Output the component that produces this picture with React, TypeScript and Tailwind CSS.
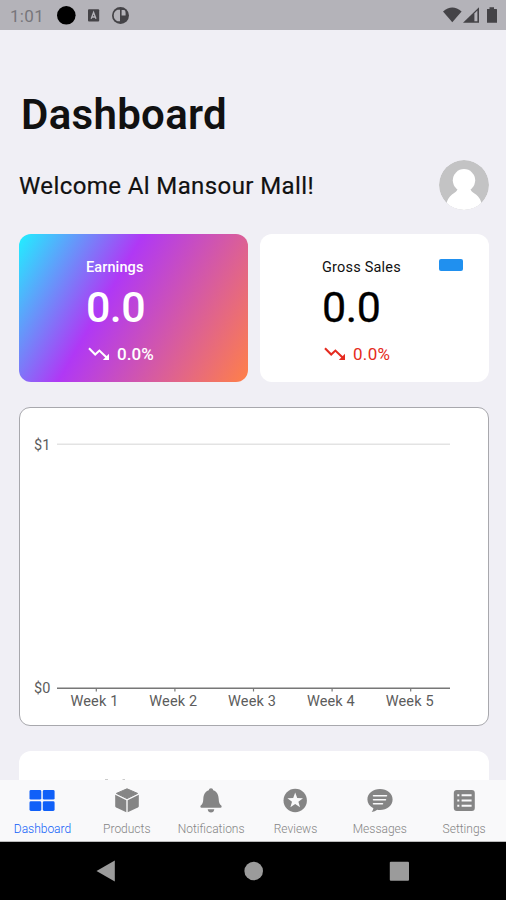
import React from "react";

function TrendDown() {
  return (
    <svg width="22" height="14" viewBox="0 0 22 14" fill="none" stroke="currentColor" strokeWidth="2.1">
      <path d="M1 1.2 L7.2 7.6 L11.4 3.6 L18.6 10.6" />
      <path d="M21 6.8 V13 H14.8 Z" fill="currentColor" stroke="none" />
    </svg>
  );
}

function StatusBar() {
  return (
    <header className="flex h-[30px] shrink-0 items-center justify-between bg-[#b4b3b9] pl-[10px] pr-[8px] text-[#77767b]">
      <div className="flex items-center">
        <span className="w-[46px] text-[17px] leading-[30px] tracking-[0.3px] pt-[1px]">1:01</span>
        <svg width="75" height="22" viewBox="56 4 75 22">
          <circle cx="66.3" cy="15.3" r="9.3" fill="#000" />
          <rect x="88" y="9.3" width="11.2" height="12.2" rx="1" fill="#444347" />
          <path d="M91.2 18.8 L93.6 12.4 L96 18.8 M92 17 H95" fill="none" stroke="#b4b3b9" strokeWidth="1.3" />
          <circle cx="120.5" cy="15.5" r="8.5" fill="#444347" />
          <path d="M120 9.8 H117.5 A6.2 6.2 0 0 0 117.5 21.2 H120 Z" fill="#b4b3b9" />
          <path d="M121.6 10 H124.4 Q125.6 10.6 125.6 13 V15.6 H121.6 Z" fill="#b4b3b9" />
        </svg>
      </div>
      <svg width="56" height="20" viewBox="442 5 56 20" fill="#444347">
        <path d="M443 11.5 Q452.3 3.5 461.6 11.5 L452.3 22.3 Z" />
        <path d="M463 22.7 L479 7.2 V22.7 Z" />
        <path d="M474.4 13.5 L477.4 10.6 V21.2 H474.4 Z" fill="#b4b3b9" />
        <path d="M487 9 H489.5 V7.3 H494 V9 H496.5 Q497 9 497 10 V22.7 H487 Z" />
      </svg>
    </header>
  );
}

function Avatar() {
  return (
    <svg width="50" height="50" viewBox="0 0 50 50">
      <defs>
        <clipPath id="avatar">
          <circle cx="25" cy="25" r="25" />
        </clipPath>
      </defs>
      <g clipPath="url(#avatar)">
        <circle cx="25" cy="25" r="25" fill="#c3c3c4" />
        <circle cx="25" cy="20.3" r="11.2" fill="#fff" />
        <path d="M19 27 H31 C31 31 34 32.5 37 34.5 Q41 37.5 42.5 43 Q35 50 25 50 Q15 50 7.5 43 Q9 37.5 13 34.5 C16 32.5 19 31 19 27 Z" fill="#fff" />
      </g>
    </svg>
  );
}

const weeks = ["Week 1", "Week 2", "Week 3", "Week 4", "Week 5"];

function Chart() {
  return (
    <section className="mt-[25px] h-[319px] shrink-0 rounded-[11px] border border-[#a8a8ad] bg-white">
      <svg width="467" height="317" viewBox="20 408 467 317" fontSize="14.5" fill="#5c5c5c" letterSpacing="0.15">
        <text x="34" y="449.5">$1</text>
        <text x="34" y="693">$0</text>
        <path d="M57 444.3 H450" stroke="#e3e3e3" strokeWidth="1.4" />
        <path d="M57 688.3 H450" stroke="#777" strokeWidth="1.5" />
        {weeks.map((week, i) => (
          <g key={week}>
            <path d={`M${96.3 + i * 78.6} 688 v3.5`} stroke="#777" strokeWidth="1.2" />
            <text x={94.5 + i * 78.8} y="705.7" textAnchor="middle">{week}</text>
          </g>
        ))}
      </svg>
    </section>
  );
}

const iconPaths: Record<string, React.ReactNode> = {
  Dashboard: (
    <g>
      <rect x="2.5" y="3" width="11.8" height="9.6" rx="1.4" />
      <rect x="15.8" y="3" width="11.8" height="9.6" rx="1.4" />
      <rect x="2.5" y="14.3" width="11.8" height="9.6" rx="1.4" />
      <rect x="15.8" y="14.3" width="11.8" height="9.6" rx="1.4" />
    </g>
  ),
  Products: (
    <g>
      <path d="M15 1.8 L25.6 6.4 L15 11.6 L4.4 6.4 Z" strokeWidth="1" stroke="currentColor" strokeLinejoin="round" />
      <path d="M3.2 7.8 L14.3 13.2 V25.3 L4.2 20.5 Q3.2 20 3.2 19 Z" />
      <path d="M26.8 7.8 L15.7 13.2 V25.3 L25.8 20.5 Q26.8 20 26.8 19 Z" />
    </g>
  ),
  Notifications: (
    <g>
      <path d="M15 1.2 C16.3 1.2 17 2 17.2 3.3 C21 4.5 22.5 7.8 22.7 12 C22.8 15.5 23.5 17 25.3 18.6 Q26.3 20.7 24.5 20.7 H5.5 Q3.7 20.7 4.7 18.6 C6.5 17 7.2 15.5 7.3 12 C7.5 7.8 9 4.5 12.8 3.3 C13 2 13.7 1.2 15 1.2 Z" />
      <path d="M11.7 22.2 H18.3 Q17.8 25.4 15 25.4 Q12.2 25.4 11.7 22.2 Z" />
    </g>
  ),
  Reviews: (
    <g>
      <circle cx="15.2" cy="13.5" r="11.7" />
      <path d="M15.2 5.6 L17.2 11 L23 11.2 L18.4 14.7 L20 20.3 L15.2 17 L10.4 20.3 L12 14.7 L7.4 11.2 L13.2 11 Z" fill="#f9f9fa" />
    </g>
  ),
  Messages: (
    <g>
      <path d="M15 2 C22 2 27.6 6.5 27.6 12.5 S22 23 15 23 Q13.5 23 12.2 22.7 Q10 24.5 6.7 25 Q8.3 23 8.4 21.2 C4.5 19.2 2.4 16 2.4 12.5 C2.4 6.5 8 2 15 2 Z" />
      <path d="M8.5 8.7 H21.5 M8.5 12.7 H20.5 M8.5 16.7 H17.5" stroke="#f9f9fa" strokeWidth="1.5" strokeLinecap="round" />
    </g>
  ),
  Settings: (
    <g>
      <rect x="4.8" y="3" width="21" height="21" rx="3" />
      <path d="M8.3 8.3 H10.3 M8.3 13.5 H10.3 M8.3 18.7 H10.3 M12.6 8.3 H22.6 M12.6 13.5 H22.6 M12.6 18.7 H22.6" stroke="#f9f9fa" strokeWidth="2.1" />
    </g>
  ),
};

const tabs = ["Dashboard", "Products", "Notifications", "Reviews", "Messages", "Settings"];

function TabBar() {
  return (
    <nav className="grid h-[62px] shrink-0 grid-cols-6 border-b border-[#bbb] bg-[#f9f9fa]">
      {tabs.map((tab) => (
        <div
          key={tab}
          className={`flex flex-col items-center pt-[6.5px] ${tab === "Dashboard" ? "text-[#1060f8]" : "text-[#858585]"}`}
        >
          <svg width="30" height="27" viewBox="0 0 30 27" fill="currentColor" className="ml-[0.6px] shrink-0">
            {iconPaths[tab]}
          </svg>
          <span className="mt-[7px] ml-[0.6px] text-[12px] leading-[16px] font-light tracking-[0px]">{tab}</span>
        </div>
      ))}
    </nav>
  );
}

export default function App() {
  return (
    <div className="flex h-[900px] w-[506px] flex-col overflow-hidden bg-[#f0eff5] font-[Roboto,sans-serif] text-[#111]">
      <StatusBar />
      <main className="flex min-h-0 flex-1 flex-col overflow-hidden pl-[19px] pr-[17px]">
        <h1 className="mt-[61px] h-[47px] shrink-0 pl-[2px] text-[42px] leading-[48px] font-semibold tracking-[0.3px]">Dashboard</h1>
        <div className="mt-[22px] flex h-[50px] shrink-0 items-center justify-between">
          <p className="pt-[2px] text-[24px] leading-[30px] tracking-[0.4px] [-webkit-text-stroke:0.2px_#111]">Welcome Al Mansour Mall!</p>
          <Avatar />
        </div>
        <div className="mt-[24px] grid h-[148px] shrink-0 grid-cols-2 gap-[12px]">
          <section className="rounded-[12px] bg-[linear-gradient(120deg,#20f0ff_0%,#b038f5_39.5%,#ff8048_100%)] pl-[67px] pt-[25px] text-white">
            <h2 className="text-[14.5px] leading-[18px] font-medium tracking-[0.1px]">Earnings</h2>
            <p className="mt-[5px] text-[43px] leading-[50px] font-medium tracking-[-0.6px]">0.0</p>
            <p className="mt-[12px] flex items-center gap-[7px] pl-[2px] text-[17px] leading-[20px] font-medium tracking-[0.1px]">
              <TrendDown />
              0.0%
            </p>
          </section>
          <section className="flex justify-between rounded-[12px] bg-white pl-[62px] pr-[26px] pt-[25px]">
            <div>
              <h2 className="text-[14.5px] leading-[18px] tracking-[0.2px]">Gross Sales</h2>
              <p className="mt-[5px] text-[43px] leading-[50px] tracking-[-0.4px] text-black [-webkit-text-stroke:0.3px_#000]">0.0</p>
              <p className="mt-[12px] flex items-center gap-[7px] pl-[2px] text-[17px] leading-[20px] tracking-[0.3px] text-[#e52b20]">
                <TrendDown />
                0.0%
              </p>
            </div>
            <span className="h-[12px] w-[24px] rounded-[2px] bg-[#2090ef]" />
          </section>
        </div>
        <Chart />
        <section className="mt-[25px] h-[100px] shrink-0 rounded-[12px] bg-white pl-[86px] pt-[27px]">
          <svg width="22" height="3" viewBox="0 0 22 3" fill="#ccc">
            <rect x="0" y="1" width="3" height="1" />
            <rect x="17.5" y="1" width="2.5" height="1" />
          </svg>
        </section>
      </main>
      <TabBar />
      <footer className="flex h-[58px] shrink-0 justify-center bg-black">
        <svg width="506" height="58" viewBox="0 842 506 58" fill="#9b9b9b">
          <path d="M96.5 871 L114.8 860.5 V881.5 Z" />
          <circle cx="253.7" cy="871" r="9.3" />
          <rect x="389.8" y="861.8" width="19.2" height="19" rx="1" />
        </svg>
      </footer>
    </div>
  );
}
